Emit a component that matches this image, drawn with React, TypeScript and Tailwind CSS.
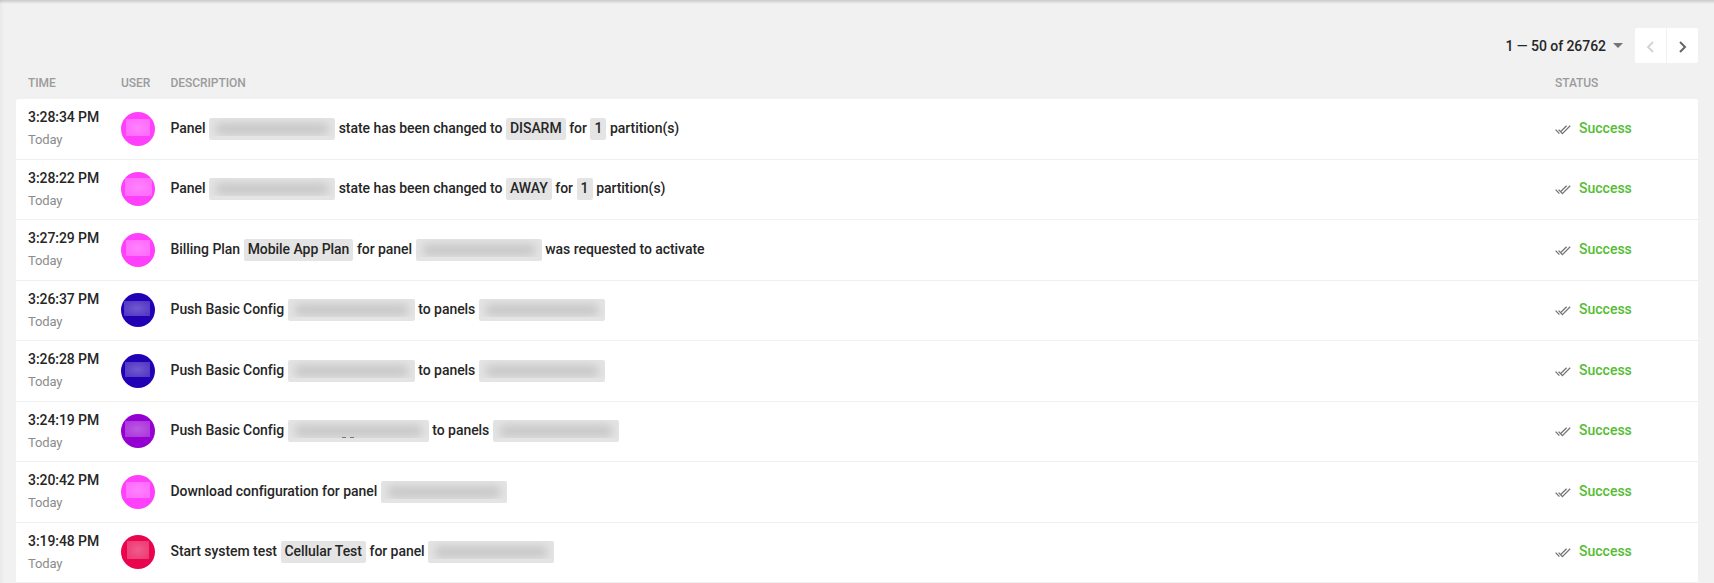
import type { ReactNode } from 'react'
import clsx from 'clsx'

type Part = string | { tag: string } | { hidden: string; marks?: boolean }

interface Entry {
  time: string
  avatar: string
  mask: string
  parts: Part[]
}

const PANEL = { hidden: 'w-[126px]' }

const ENTRIES: Entry[] = [
  {
    time: '3:28:34 PM',
    avatar: 'bg-[#ff40fb]',
    mask: 'ml-[5px] mt-[7px] w-6 h-[17px]',
    parts: ['Panel', PANEL, 'state has been changed to', { tag: 'DISARM' }, 'for', { tag: '1' }, 'partition(s)'],
  },
  {
    time: '3:28:22 PM',
    avatar: 'bg-[#ff40fb]',
    mask: 'ml-1 mt-1.5 w-[27px] h-[18px]',
    parts: ['Panel', PANEL, 'state has been changed to', { tag: 'AWAY' }, 'for', { tag: '1' }, 'partition(s)'],
  },
  {
    time: '3:27:29 PM',
    avatar: 'bg-[#ff40fb]',
    mask: 'ml-[5px] mt-[7px] w-6 h-4',
    parts: ['Billing Plan', { tag: 'Mobile App Plan' }, 'for panel', PANEL, 'was requested to activate'],
  },
  {
    time: '3:26:37 PM',
    avatar: 'bg-[#2200b4]',
    mask: 'ml-[3px] mt-2 w-[26px] h-[15px]',
    parts: ['Push Basic Config', { hidden: 'w-[127px]' }, 'to panels', PANEL],
  },
  {
    time: '3:26:28 PM',
    avatar: 'bg-[#2200b4]',
    mask: 'ml-1 mt-2 w-[25px] h-[15px]',
    parts: ['Push Basic Config', { hidden: 'w-[127px]' }, 'to panels', PANEL],
  },
  {
    time: '3:24:19 PM',
    avatar: 'bg-[#9500d2]',
    mask: 'ml-1 mt-[7px] w-[25px] h-4',
    parts: ['Push Basic Config', { hidden: 'w-[141px]', marks: true }, 'to panels', PANEL],
  },
  {
    time: '3:20:42 PM',
    avatar: 'bg-[#ff40fb]',
    mask: 'ml-[5px] mt-[7px] w-6 h-4',
    parts: ['Download configuration for panel', PANEL],
  },
  {
    time: '3:19:48 PM',
    avatar: 'bg-[#e8044e]',
    mask: 'ml-1.5 mt-1.5 w-[22px] h-[18px]',
    parts: ['Start system test', { tag: 'Cellular Test' }, 'for panel', PANEL],
  },
]

function Chip({ className, children }: { className?: string; children?: ReactNode }) {
  return (
    <span className={clsx('block h-[22px] shrink-0 rounded-[2px] bg-[#e4e4e4] leading-5', className)}>
      {children}
    </span>
  )
}

function Redacted({ width, marks }: { width: string; marks?: boolean }) {
  return (
    <Chip className={clsx('relative', width)}>
      <span className="block h-[18px] overflow-hidden px-1.5 pt-[5px]">
        <span className="block h-3 rounded-md bg-[#c8c8c8] blur-[4px]" />
      </span>
      {marks && (
        <span className="absolute bottom-1 left-[54px] flex gap-1">
          <span className="h-px w-1 bg-[#777]" />
          <span className="h-px w-1 bg-[#777]" />
        </span>
      )}
    </Chip>
  )
}

function Description({ parts }: { parts: Part[] }) {
  return (
    <div className="flex flex-1 items-center gap-[3.6px] tracking-[-0.05px] whitespace-nowrap">
      {parts.map((part, i) => {
        if (typeof part === 'string') return <span key={i} className="-mt-0.5">{part}</span>
        if ('tag' in part) return <Chip key={i} className="px-1">{part.tag}</Chip>
        return <Redacted key={i} width={part.hidden} marks={part.marks} />
      })}
    </div>
  )
}

function DoubleCheck() {
  return (
    <svg className="mt-0.5 h-[10px] w-4" viewBox="0 0 16 10" fill="none" stroke="#757575" strokeWidth="1.3">
      <path d="M.6 4.6 4.4 8.6M3.6 4.6l3.8 4L15.2.8M6 6.2 11.6.8" />
    </svg>
  )
}

export default function App() {
  return (
    <div className="relative h-screen overflow-hidden bg-[#f1f1f1] px-4 font-['Roboto',sans-serif] text-sm font-medium text-[#262626]">
      {/* Shadows cast by the app bar and the side nav */}
      <div className="absolute inset-x-0 top-0 h-1 bg-linear-to-b from-[#cacaca] to-transparent" />
      <div className="absolute inset-y-0 left-0 w-1 bg-linear-to-r from-black/4 to-transparent" />

      {/* Pager */}
      <div className="flex h-[63px] items-end justify-end">
        <button className="mr-3 flex h-[35px] items-center gap-[7px] tracking-[-0.05px]">
          1 — 50 of 26762
          <svg className="h-[5px] w-[10px]" viewBox="0 0 10 5" fill="#757575">
            <path d="M0 0h10L5 5z" />
          </svg>
        </button>
        <div className="flex">
          <button className="flex h-[35px] w-8 items-center justify-center rounded-l-[2px] border-r border-[#f1f1f1] bg-white pr-px">
            <svg className="mt-0.5 h-3 w-2" viewBox="0 0 8 12" fill="none" stroke="#d2d2d2" strokeWidth="1.8">
              <path d="M7 1 2 6l5 5" />
            </svg>
          </button>
          <button className="flex h-[35px] w-[31px] items-center justify-center rounded-r-[2px] bg-white">
            <svg className="mt-0.5 h-3 w-2" viewBox="0 0 8 12" fill="none" stroke="#666" strokeWidth="2">
              <path d="m1 1 5 5-5 5" />
            </svg>
          </button>
        </div>
      </div>

      {/* Column heads */}
      <div className="flex h-9 items-center px-3 pt-1 text-xs tracking-[-0.06px] text-[#9b9b9b]">
        <span className="w-[93px]">TIME</span>
        <span className="w-[49.5px]">USER</span>
        <span className="flex-1">DESCRIPTION</span>
        <span className="w-[131px]">STATUS</span>
      </div>

      <div className="overflow-hidden rounded-t-[2px] bg-white">
        {ENTRIES.map((entry) => (
          <div key={entry.time} className="flex h-[60.5px] items-center border-b border-[#f0f0f0] px-3">
            <div className="w-[93px]">
              <div className="leading-5 tracking-[-0.07px]">{entry.time}</div>
              <div className="mt-[3px] text-[13px] leading-5 font-normal tracking-[-0.15px] text-[#8c8c8c]">Today</div>
            </div>
            <div className="w-[49.5px]">
              <div className={clsx('flex size-[34px] items-start rounded-full', entry.avatar)}>
                <div className={clsx('bg-radial from-white/35 to-white/20', entry.mask)} />
              </div>
            </div>
            <Description parts={entry.parts} />
            <div className="flex w-[131px] items-center gap-2 text-[#54bd33]">
              <DoubleCheck />
              <span className="-mt-0.5">Success</span>
            </div>
          </div>
        ))}
      </div>
    </div>
  )
}
